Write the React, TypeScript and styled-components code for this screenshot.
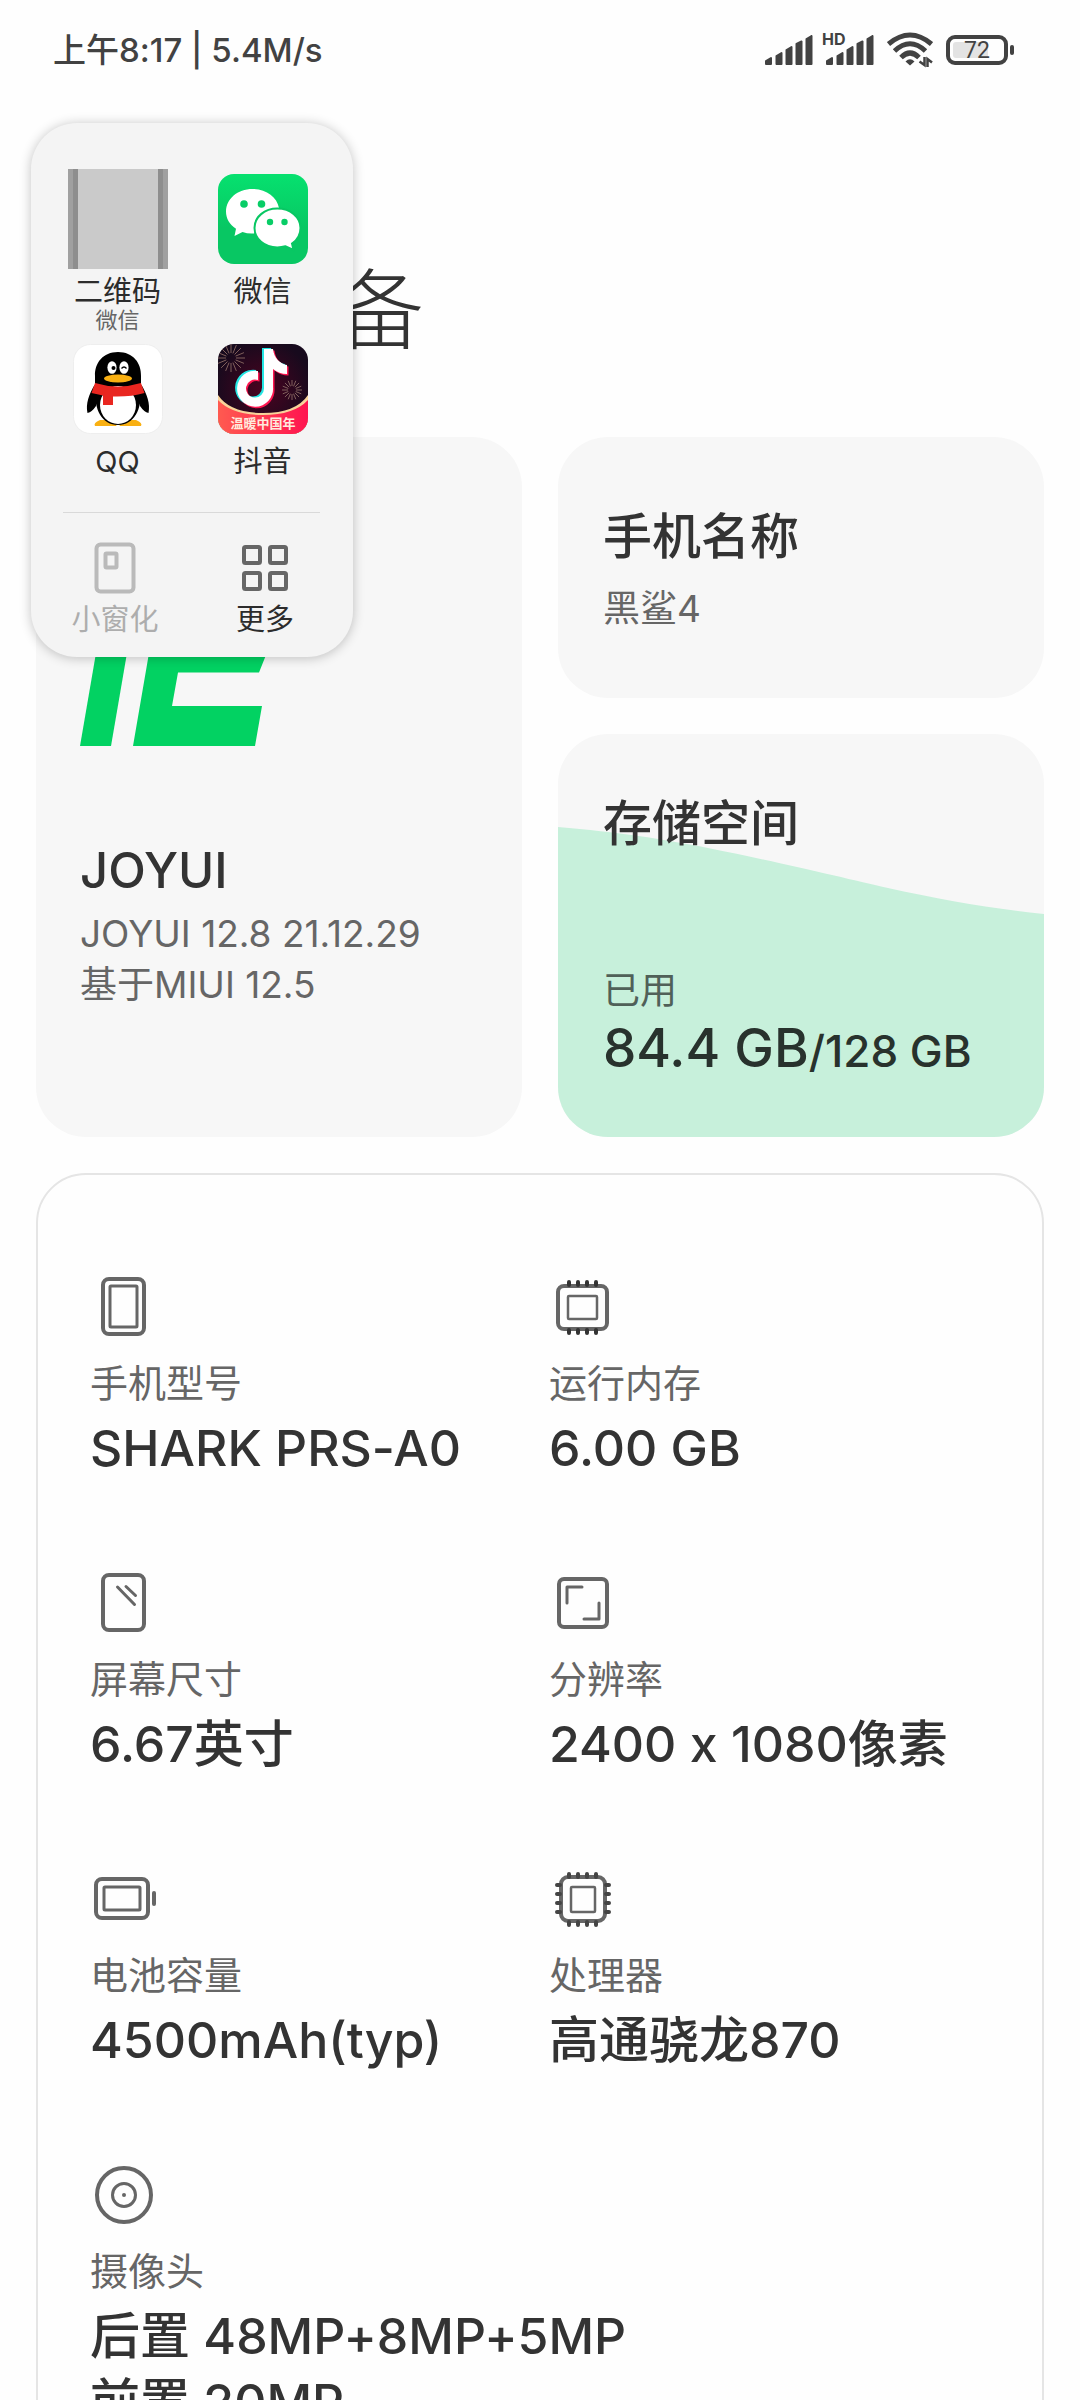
import React from "react";
import styled, { createGlobalStyle } from "styled-components";

const GlobalStyle = createGlobalStyle`
  * { box-sizing: border-box; }
  html, body { margin: 0; background: #fefefe; }
  body {
    font-family: Inter, "Noto Sans CJK SC", sans-serif;
    font-variant-ligatures: no-contextual;
    color: #333;
  }
  h1, h2, p, dl, dt, dd { margin: 0; font-weight: inherit; }
  svg { display: block; flex: none; }
`;

const Screen = styled.div`
  position: relative;
  height: 100vh;
  overflow: hidden;
  background: #fefefe;
`;

/* ---------- status bar ---------- */

const StatusBar = styled.header`
  display: flex;
  align-items: center;
  justify-content: space-between;
  height: 100px;
  padding: 0 66px 0 53px;
  color: #424242;
`;

const StatusText = styled.span`
  font-size: 33px;
  line-height: 48px;
  font-weight: 500;
`;

const StatusIcons = styled.div`
  display: flex;
  align-items: center;
  gap: 13px;
`;

const SignalWrap = styled.div`
  position: relative;
`;

const HdBadge = styled.span`
  position: absolute;
  left: -4px;
  top: -6px;
  font-size: 16px;
  line-height: 20px;
  font-weight: 700;
`;

const Battery = styled.div`
  display: flex;
  align-items: center;
  gap: 2px;
`;

const BatteryShell = styled.div`
  width: 62px;
  height: 30px;
  padding: 3px;
  border: 4px solid #424242;
  border-radius: 9px;
`;

const BatteryLevel = styled.div`
  width: 100%;
  height: 16px;
  border-radius: 3px;
  background: linear-gradient(to right, #e3e3e3 72%, transparent 72%);
  font: 400 23px/18px Roboto, sans-serif;
  text-align: center;
`;

const BatteryCap = styled.div`
  width: 4px;
  height: 10px;
  border-radius: 2px;
  background: #424242;
`;

/* ---------- page ---------- */

const PageTitle = styled.h1`
  padding: 144px 72px 61px;
  font-size: 88px;
  line-height: 132px;
  font-weight: 300;
`;

const Main = styled.main`
  display: grid;
  gap: 36px;
  padding: 0 36px;
`;

const Cards = styled.section`
  display: grid;
  grid-template-columns: 1fr 1fr;
  gap: 36px;
`;

const Column = styled.div`
  display: grid;
  grid-template-rows: 261px 1fr;
  gap: 36px;
`;

const Card = styled.article`
  position: relative;
  display: flex;
  flex-direction: column;
  padding: 57px 45px 53px;
  border-radius: 50px;
  overflow: hidden;
  background: #f7f7f7;
`;

const SystemCard = styled(Card)`
  padding: 123px 44px 127px;
`;

const NameCard = styled(Card)`
  gap: 13px;
  padding-top: 67px;
`;

const StorageCard = styled(Card)`
  justify-content: space-between;
`;

const SystemText = styled.div`
  display: grid;
  gap: 4px;
  margin-top: 92px;
`;

const CardTitle = styled.h2`
  position: relative;
  font-size: 49px;
  line-height: 66px;
  font-weight: 500;
`;

const CardText = styled.p`
  font-size: 37px;
  line-height: 51px;
  color: #666;
`;

const Wave = styled.svg`
  position: absolute;
  inset: 0;
  width: 100%;
  height: 100%;
`;

const Usage = styled.div`
  position: relative;
`;

const UsageLabel = styled.p`
  font-size: 37px;
  line-height: 48px;
  color: #506058;
`;

const UsageValue = styled.p`
  font-size: 53px;
  line-height: 66px;
  font-weight: 500;
  color: #28322d;
  white-space: nowrap;
`;

const UsageTotal = styled.span`
  font-size: 44px;
`;

const Specs = styled.dl`
  display: grid;
  grid-template-columns: 1fr 1fr;
  gap: 88px 18px;
  padding: 98px 52px;
  border: 2px solid #e5e5e5;
  border-radius: 50px;
`;

const Spec = styled.div<{ $wide?: boolean }>`
  grid-column: ${(p) => (p.$wide ? "1 / -1" : "auto")};
`;

const SpecLabel = styled.dt`
  margin: 20px 0 8px;
  font-size: 38px;
  line-height: 48px;
  color: #666;
`;

const SpecValue = styled.dd`
  font-size: 50px;
  line-height: 66px;
  font-weight: 500;
  white-space: nowrap;
`;

/* ---------- floating shortcut panel ---------- */

const Panel = styled.aside`
  position: absolute;
  left: 31px;
  top: 123px;
  width: 322px;
  padding: 46px 13px 19px 9px;
  border-radius: 46px;
  background: #f4f4f4;
  box-shadow: 0 1px 12px rgba(0, 0, 0, 0.24);
`;

const AppGrid = styled.div`
  display: grid;
  grid-template-columns: 1fr 1fr;
  gap: 9px 0;
  padding: 0 5px 32px;
`;

const ActionGrid = styled.div`
  display: grid;
  grid-template-columns: 1fr 1fr;
  padding-top: 27px;
`;

const Divider = styled.hr`
  height: 1px;
  margin: 0 20px 0 23px;
  border: 0;
  background: #d9d9d9;
`;

const Tile = styled.button`
  display: flex;
  flex-direction: column;
  align-items: center;
  padding: 0;
  border: 0;
  background: none;
  font-family: inherit;
  color: #2c2c2c;
  &:disabled { color: #adadad; }
`;

const TileIcon = styled.span<{ $size: number; $gap: number }>`
  display: grid;
  place-items: center;
  width: ${(p) => p.$size}px;
  height: ${(p) => p.$size}px;
  margin-bottom: ${(p) => p.$gap}px;
`;

const Placeholder = styled.span`
  width: 100px;
  height: 100px;
  border: solid #a0a0a0;
  border-width: 0 5px;
  background: linear-gradient(to right, #8e8e8e 5px, #cacaca 5px, #cacaca 85px, #8e8e8e 85px);
  background-clip: padding-box;
`;

const TileLabel = styled.span`
  font-size: 29px;
  line-height: 36px;
`;

const TileHint = styled.span`
  font-size: 22px;
  line-height: 20px;
  color: #666;
`;

/* ---------- drawings ---------- */

const SignalIcon = () => (
  <svg width="48" height="30" viewBox="0 0 48 30" fill="#424242" stroke="#424242" strokeWidth="2" strokeLinejoin="round">
    <path d="M1 29V26L6 23V29ZM11.500 29V21L16.500 18V29ZM21.500 29V15L26.500 12V29ZM31.500 29V9L36.500 6.500V29ZM41.500 29V4L46.500 1V29Z" />
  </svg>
);

const WifiIcon = () => (
  <svg width="46" height="36" viewBox="0 0 46 36" fill="none" stroke="#424242" strokeWidth="5">
    <path d="M1.500 12Q23-6 44.500 12" />
    <path d="M7.500 19Q23 4.500 38.500 19" />
    <path d="M14 25.500Q23 16.500 32 25.500" />
    <path d="M18.500 29.500Q23 25 27.500 29.500L23 33.500Z" fill="#424242" stroke="none" />
    <path d="M37.500 25V33L32.500 29.500M40.500 35V27L45 30.500" strokeWidth="2.500" />
  </svg>
);

const JoyLogo = () => (
  <svg width="212" height="186" viewBox="0 0 212 186" fill="#02d262">
    <path d="M32 0H63L31 186H0Z" />
    <path d="M85 0H224L179 112.500H98L92 146H182L175 186H53Z" />
  </svg>
);

const SpecSvg = ({ children }: { children: React.ReactNode }) => (
  <svg width="66" height="66" viewBox="0 0 66 66" fill="none" stroke="#666" strokeWidth="4" strokeLinecap="round" strokeLinejoin="round">
    {children}
  </svg>
);

const PhoneIcon = () => (
  <SpecSvg>
    <rect x="13" y="6" width="41" height="55" rx="6" />
    <rect x="20" y="13" width="27" height="41" rx="1" strokeWidth="3" />
  </SpecSvg>
);

const MemoryIcon = () => (
  <SpecSvg>
    <rect x="9" y="13" width="49" height="43" rx="6" />
    <rect x="19" y="23" width="29" height="23" rx="1" strokeWidth="2.500" />
    <path stroke="#333" d="M20 9V12M29 9V12M38 9V12M47 9V12M20 57V60M29 57V60M38 57V60M47 57V60" />
  </SpecSvg>
);

const ScreenIcon = () => (
  <SpecSvg>
    <rect x="13" y="6" width="41" height="55" rx="6" />
    <path strokeWidth="3" d="M27.500 18L44.500 35.500M36 17.500L45.500 26.500" />
  </SpecSvg>
);

const ResolutionIcon = () => (
  <SpecSvg>
    <rect x="10" y="10" width="48" height="48" rx="5" />
    <path strokeWidth="3" d="M18 34V18H33M50 34V50H35" />
  </SpecSvg>
);

const BatteryIcon = () => (
  <SpecSvg>
    <rect x="6" y="14" width="52" height="39" rx="6" />
    <rect x="14" y="22" width="36" height="23" rx="1" strokeWidth="3" />
    <path d="M64 28V39" />
  </SpecSvg>
);

const CpuIcon = () => (
  <SpecSvg>
    <rect x="12" y="12" width="44" height="44" rx="7" />
    <rect x="22" y="22" width="24" height="25" rx="1" strokeWidth="2.500" />
    <path
      stroke="#444"
      d="M20 9V12M29 9V12M38 9V12M47 9V12M20 57V60M29 57V60M38 57V60M47 57V60M8 20H11M8 29H11M8 38H11M8 47H11M57 20H60M57 29H60M57 38H60M57 47H60"
    />
  </SpecSvg>
);

const CameraIcon = () => (
  <SpecSvg>
    <circle cx="34" cy="34" r="27" />
    <circle cx="34" cy="34" r="11.500" strokeWidth="3" />
    <circle cx="34" cy="34" r="2" fill="#666" stroke="none" />
  </SpecSvg>
);

const WeChatIcon = () => (
  <svg width="90" height="90" viewBox="0 0 90 90">
    <defs>
      <linearGradient id="wechat" x1="0" y1="0" x2="0" y2="1">
        <stop offset="0" stopColor="#06e16f" />
        <stop offset="0.600" stopColor="#08c763" />
        <stop offset="1" stopColor="#08c763" />
      </linearGradient>
    </defs>
    <rect width="90" height="90" rx="16" fill="url(#wechat)" />
    <path fill="#fff" d="M34.500 15C19.500 15 8 25 8 37.500C8 44.500 11.500 50.500 18 54.800L16.500 62L24.500 58Q30 60 36 59.500L61 34C59 23 48 15 34.500 15Z" />
    <path
      fill="#fff"
      stroke="#08c763"
      strokeWidth="2"
      d="M59.300 34.500C46.500 34.500 36.500 43 36.500 54C36.500 65 46.500 73.500 59.300 73.500Q63.500 73.500 67.500 72.300L75.500 76L74 69.500C79.500 66 82.500 60.500 82.500 54C82.500 43 72.500 34.500 59.300 34.500Z"
    />
    <g fill="#08cd66">
      <circle cx="26" cy="30" r="3.800" />
      <circle cx="43.500" cy="30" r="3.800" />
      <circle cx="52" cy="48" r="3.200" />
      <circle cx="66.500" cy="48" r="3.200" />
    </g>
  </svg>
);

const QQIcon = () => (
  <svg width="90" height="90" viewBox="0 0 90 90">
    <rect x="0.500" y="0.500" width="89" height="89" rx="17" fill="#fff" stroke="#eee" />
    <path fill="#f9b012" d="M27 76Q20 79 22 82H43L45 79L47 82H68Q70 79 63 76Z" />
    <path d="M21.500 41C16 50 12.500 60 14.500 69Q19 68 23 62L26 45ZM68.500 41C74 50 77.500 60 75.500 69Q71 68 67 62L64 45Z" />
    <path d="M45 8C30 8 21.500 19 22 32V44C21 66 29 81 45 81S69 66 68 44V32C68.500 19 60 8 45 8Z" />
    <ellipse cx="45" cy="61" rx="18" ry="19" fill="#fff" />
    <path fill="#e92620" d="M22 39Q45 46 68 39L71.500 49Q58 53 40 52.500V61H30V51.500L18.500 49Z" />
    <ellipse cx="39" cy="23.500" rx="4.600" ry="6.300" fill="#fff" />
    <ellipse cx="51" cy="23.500" rx="4.600" ry="6.300" fill="#fff" />
    <circle cx="40.500" cy="24" r="2" />
    <path d="M48.500 24.500Q51 21.500 53.500 24.500" fill="none" stroke="#000" strokeWidth="1.300" />
    <ellipse cx="45" cy="34.500" rx="14" ry="4" fill="#f9b012" />
  </svg>
);

const NOTE = "M46 5H55C56 14 62 20 69 21V30Q61 30 55 25V43A18 18 0 1 1 40 27V36A9 9 0 1 0 46 44Z";

const rays = (cx: number, cy: number, inner: number, outer: number) =>
  Array.from({ length: 16 }, (_, i) => {
    const a = (i * Math.PI) / 8;
    return `M${cx + inner * Math.cos(a)} ${cy + inner * Math.sin(a)}L${cx + outer * Math.cos(a)} ${cy + outer * Math.sin(a)}`;
  }).join("");

const DouyinIcon = () => (
  <svg width="90" height="90" viewBox="0 0 90 90">
    <defs>
      <clipPath id="douyinClip">
        <rect width="90" height="90" rx="16" />
      </clipPath>
      <radialGradient id="douyinBg" cx="0.500" cy="0.500" r="0.550">
        <stop offset="0" stopColor="#4b0320" />
        <stop offset="1" stopColor="#170a1d" />
      </radialGradient>
      <linearGradient id="banner" x1="0" x2="1">
        <stop offset="0" stopColor="#ff5a50" />
        <stop offset="1" stopColor="#ff1450" />
      </linearGradient>
    </defs>
    <g clipPath="url(#douyinClip)">
      <rect width="90" height="90" fill="url(#douyinBg)" />
      <g stroke="#80605c" strokeWidth="1" fill="none">
        <path d={rays(13, 14, 5, 14)} />
        <path d={rays(74, 46, 4, 10)} />
      </g>
      <path fill="#25e6e4" transform="translate(-2 -1)" d={NOTE} />
      <path fill="#fe1650" transform="translate(1.500 1.500)" d={NOTE} />
      <path fill="#fff" d={NOTE} />
      <path fill="#f8d39a" d="M0 51Q12 69 45 69T90 51V90H0Z" />
      <path fill="url(#banner)" d="M0 56Q14 71 45 71T90 56V90H0Z" />
      <text x="45" y="84" textAnchor="middle" fill="#ffeade" fontSize="13" fontWeight="700" fontFamily="'Noto Sans CJK SC', sans-serif">
        温暖中国年
      </text>
    </g>
  </svg>
);

const WindowIcon = () => (
  <svg width="42" height="52" viewBox="0 0 42 52" fill="none" stroke="#bababa" strokeWidth="4">
    <rect x="2.500" y="2.500" width="37" height="47" rx="4" />
    <rect x="11.500" y="11.500" width="11" height="14" rx="1" />
  </svg>
);

const MoreIcon = () => (
  <svg width="46" height="46" viewBox="0 0 46 46" fill="none" stroke="#666" strokeWidth="4">
    <rect x="2" y="2" width="16" height="16" rx="1.500" />
    <rect x="28" y="2" width="16" height="16" rx="1.500" />
    <rect x="2" y="28" width="16" height="16" rx="1.500" />
    <rect x="28" y="28" width="16" height="16" rx="1.500" />
  </svg>
);

/* ---------- data ---------- */

const apps = [
  { name: "二维码", hint: "微信", icon: <Placeholder /> },
  { name: "微信", icon: <WeChatIcon /> },
  { name: "QQ", icon: <QQIcon /> },
  { name: "抖音", icon: <DouyinIcon /> },
];

const specs = [
  { label: "手机型号", lines: ["SHARK PRS-A0"], icon: <PhoneIcon /> },
  { label: "运行内存", lines: ["6.00 GB"], icon: <MemoryIcon /> },
  { label: "屏幕尺寸", lines: ["6.67英寸"], icon: <ScreenIcon /> },
  { label: "分辨率", lines: ["2400 x 1080像素"], icon: <ResolutionIcon /> },
  { label: "电池容量", lines: ["4500mAh(typ)"], icon: <BatteryIcon /> },
  { label: "处理器", lines: ["高通骁龙870"], icon: <CpuIcon /> },
  { label: "摄像头", lines: ["后置 48MP+8MP+5MP", "前置 20MP"], icon: <CameraIcon />, wide: true },
];

export default function App() {
  return (
    <Screen lang="zh-CN">
      <GlobalStyle />
      <StatusBar>
        <StatusText>上午8:17 | 5.4M/s</StatusText>
        <StatusIcons>
          <SignalIcon />
          <SignalWrap>
            <HdBadge>HD</HdBadge>
            <SignalIcon />
          </SignalWrap>
          <WifiIcon />
          <Battery>
            <BatteryShell>
              <BatteryLevel>72</BatteryLevel>
            </BatteryShell>
            <BatteryCap />
          </Battery>
        </StatusIcons>
      </StatusBar>

      <PageTitle>我的设备</PageTitle>

      <Main>
        <Cards>
          <SystemCard>
            <JoyLogo />
            <SystemText>
              <CardTitle>JOYUI</CardTitle>
              <CardText>
                JOYUI 12.8 21.12.29
                <br />
                基于MIUI 12.5
              </CardText>
            </SystemText>
          </SystemCard>
          <Column>
            <NameCard>
              <CardTitle>手机名称</CardTitle>
              <CardText>黑鲨4</CardText>
            </NameCard>
            <StorageCard>
              <Wave viewBox="0 0 486 403" preserveAspectRatio="none" aria-hidden="true">
                <path fill="#c7f0db" d="M0 93C60 98 105 105 150 114C225 129 290 145 330 154C385 166 430 174 486 180V403H0Z" />
              </Wave>
              <CardTitle>存储空间</CardTitle>
              <Usage>
                <UsageLabel>已用</UsageLabel>
                <UsageValue>
                  84.4 GB<UsageTotal>/128 GB</UsageTotal>
                </UsageValue>
              </Usage>
            </StorageCard>
          </Column>
        </Cards>

        <Specs>
          {specs.map((s) => (
            <Spec key={s.label} $wide={s.wide}>
              {s.icon}
              <SpecLabel>{s.label}</SpecLabel>
              {s.lines.map((line) => (
                <SpecValue key={line}>{line}</SpecValue>
              ))}
            </Spec>
          ))}
        </Specs>
      </Main>

      <Panel>
        <AppGrid>
          {apps.map((a) => (
            <Tile key={a.name} type="button">
              <TileIcon $size={100} $gap={5}>{a.icon}</TileIcon>
              <TileLabel>{a.name}</TileLabel>
              {a.hint && <TileHint>{a.hint}</TileHint>}
            </Tile>
          ))}
        </AppGrid>
        <Divider />
        <ActionGrid>
          <Tile type="button" disabled>
            <TileIcon $size={56} $gap={6}><WindowIcon /></TileIcon>
            <TileLabel>小窗化</TileLabel>
          </Tile>
          <Tile type="button">
            <TileIcon $size={56} $gap={6}><MoreIcon /></TileIcon>
            <TileLabel>更多</TileLabel>
          </Tile>
        </ActionGrid>
      </Panel>
    </Screen>
  );
}
